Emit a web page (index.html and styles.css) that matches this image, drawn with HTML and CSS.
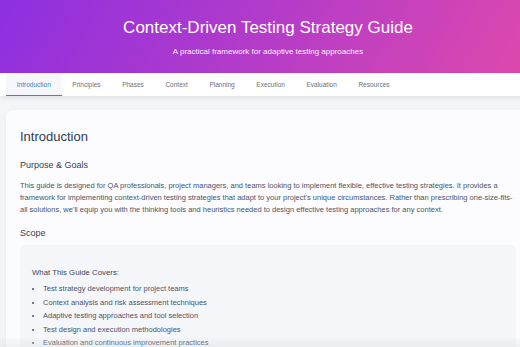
FILE: index.html
```html
<!DOCTYPE html>
<html lang="en">
<head>
    <meta charset="UTF-8">
    <meta name="viewport" content="width=device-width, initial-scale=1.0">
    <title>Context-Driven Testing Strategy Guide</title>
    <link rel="stylesheet" href="styles.css">
</head>
<body>
    <header class="hero">
        <h1>Context-Driven Testing Strategy Guide</h1>
        <p class="subtitle">A practical framework for adaptive testing approaches</p>
    </header>
    <nav class="tabs">
        <a class="tab active" href="#intro">Introduction</a>
        <a class="tab" href="#principles">Principles</a>
        <a class="tab" href="#phases">Phases</a>
        <a class="tab" href="#context">Context</a>
        <a class="tab" href="#planning">Planning</a>
        <a class="tab" href="#execution">Execution</a>
        <a class="tab" href="#evaluation">Evaluation</a>
        <a class="tab" href="#resources">Resources</a>
    </nav>
    <main class="page">
        <section class="card" id="intro">
            <h2>Introduction</h2>
            <h3>Purpose &amp; Goals</h3>
            <p>This guide is designed for QA professionals, project managers, and teams looking to implement flexible, effective testing strategies. It provides a framework for implementing context-driven testing strategies that adapt to your project's unique circumstances. Rather than prescribing one-size-fits-all solutions, we'll equip you with the thinking tools and heuristics needed to design effective testing approaches for any context.</p>
            <h3>Scope</h3>
            <div class="info-box">
                <h4>What This Guide Covers:</h4>
                <ul>
                    <li>Test strategy development for project teams</li>
                    <li>Context analysis and risk assessment techniques</li>
                    <li>Adaptive testing approaches and tool selection</li>
                    <li>Test design and execution methodologies</li>
                    <li>Evaluation and continuous improvement practices</li>
                </ul>
            </div>
        </section>
    </main>
    <div class="bottom-fade"></div>
</body>
</html>
```

FILE: styles.css
```css
html {
    overflow: hidden;
}
body {
    font-family: "Liberation Sans", Arial, sans-serif;
    margin: 0;
    padding: 0;
    width: 536px;
    background: #f4f5f8;
    color: #4a5568;
}
.hero {
    background: linear-gradient(120deg, #8d2fe0 0%, #b43cc8 50%, #df49ab 100%);
    color: white;
    text-align: center;
    height: 73px;
    padding-top: 17px;
    box-sizing: border-box;
}
.hero h1 {
    font-size: 17px;
    font-weight: normal;
    margin: 0;
    line-height: 22px;
}
.subtitle {
    font-size: 8px;
    line-height: 10px;
    margin: 8px 0 0;
    opacity: 0.92;
}
.tabs {
    display: flex;
    background: white;
    height: 23px;
    padding-left: 6px;
    box-shadow: 0 2px 5px rgba(0, 0, 0, 0.08);
    position: relative;
}
.tab {
    display: flex;
    align-items: center;
    padding: 0 10.8px;
    font-size: 6.5px;
    color: #6b6f78;
    text-decoration: none;
    border-bottom: 1px solid transparent;
}
.tab.active {
    color: #3a86c8;
    background: #f5f7fa;
    border-bottom: 1px solid #3a86c8;
}
.page {
    padding-top: 14px;
}
.card {
    background: #fcfcfe;
    margin: 0 6px;
    padding: 14px 14px 20px;
    border-radius: 6px;
    box-shadow: 0 1px 4px rgba(0, 0, 0, 0.06);
}
.card h2 {
    font-size: 13px;
    font-weight: normal;
    color: #2f3b4c;
    margin: 5px 0 16px;
}
.card h3 {
    font-size: 9px;
    font-weight: 500;
    color: #34404f;
    margin: 0;
}
.card p {
    font-size: 7.5px;
    line-height: 12px;
    margin: 10px 0 12px;
}
.info-box {
    background: #f5f6f9;
    border-radius: 5px;
    margin-top: 7px;
    padding: 23px 12px 10px;
}
.info-box h4 {
    font-size: 7.8px;
    font-weight: 500;
    color: #3b4656;
    margin: 0 0 5px;
}
.info-box ul {
    margin: 0;
    padding-left: 11px;
    font-size: 7.5px;
}
.info-box li {
    line-height: 13.5px;
}
.bottom-fade {
    position: fixed;
    left: 0;
    right: 0;
    bottom: 0;
    height: 9px;
    background: linear-gradient(to bottom, rgba(225, 226, 230, 0.1), rgba(215, 217, 222, 0.35));
}
```
